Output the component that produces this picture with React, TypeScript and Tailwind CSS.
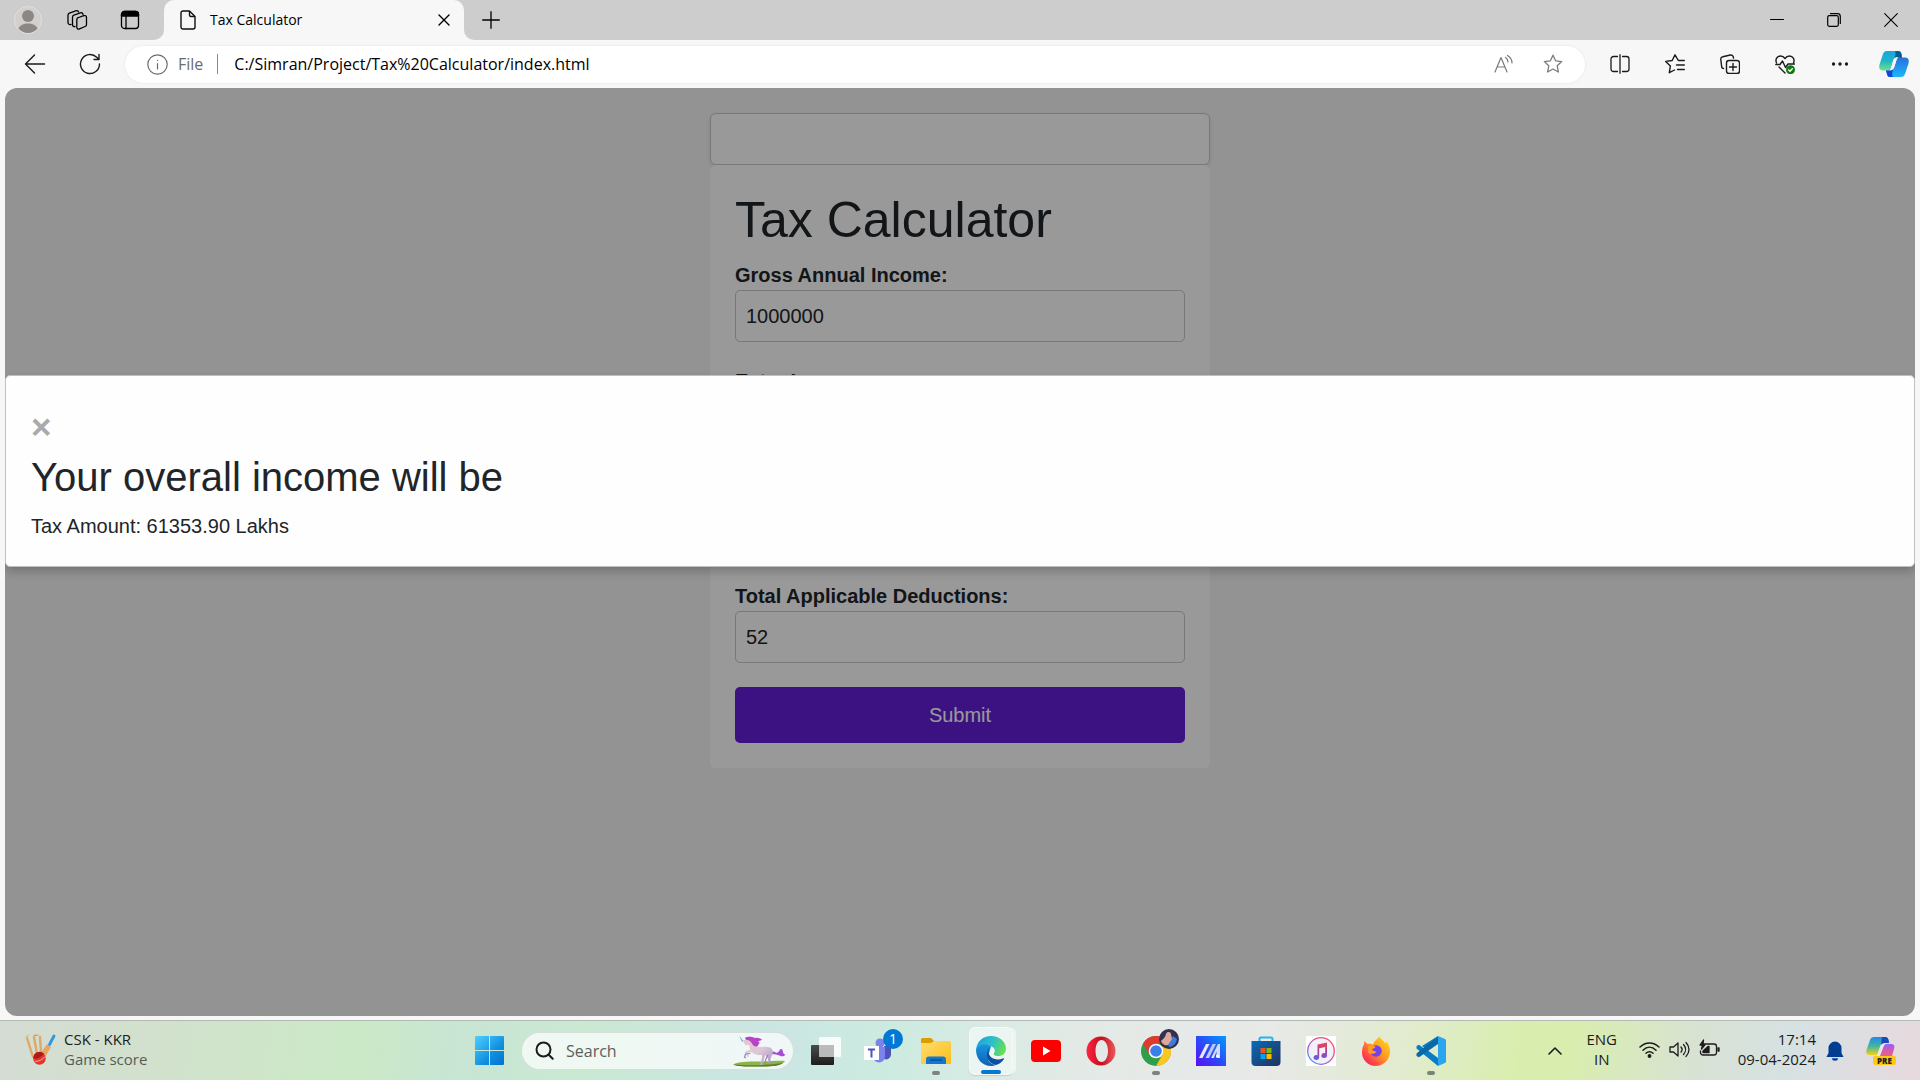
import React from "react";

const P = ({ children, s = 20, vb = "0 0 20 20", w = 1.3, className = "" }: { children: React.ReactNode; s?: number; vb?: string; w?: number; className?: string }) => (
  <svg width={s} height={s} viewBox={vb} fill="none" stroke="currentColor" strokeWidth={w} strokeLinecap="round" strokeLinejoin="round" className={className} aria-hidden="true">
    {children}
  </svg>
);

const IconButton = ({ label, className = "", children }: { label: string; className?: string; children: React.ReactNode }) => (
  <button type="button" aria-label={label} className={"flex h-9 shrink-0 items-center justify-center " + className}>
    {children}
  </button>
);

const starPath = "M10 1.2l2.6 5.6 6.1.8-4.5 4.2 1.2 6.2L10 15l-5.4 3 1.2-6.2L1.3 7.6l6.1-.8z";

function Copilot({ s = 30 }: { s?: number }) {
  return (
    <svg width={s} height={s} viewBox="0 0 30 30" aria-hidden="true">
      <defs>
        <linearGradient id="cpA" x1="0" y1="0" x2="0" y2="1">
          <stop offset="0" stopColor="#1aa5e0" />
          <stop offset=".5" stopColor="#1fb5c8" />
          <stop offset="1" stopColor="#6fe08a" />
        </linearGradient>
        <linearGradient id="cpB" x1="0" y1="0" x2="0" y2="1">
          <stop offset="0" stopColor="#2e6fdb" />
          <stop offset="1" stopColor="#18b9fb" />
        </linearGradient>
      </defs>
      <path d="M8 2h11c2 0 3 1 3.500 3L23 8h-4c-3 0-4 1-5 4l-2 7c-.5 2-1 2.500-3 2.500H4c-3 0-4.500-2-3.500-6L4 5c.7-2 2-3 4-3z" fill="url(#cpA)" />
      <path d="M16 2h3c2 0 3 1 3.500 3L23 9h-4c-2 0-3 .5-4 2 1-4 2.500-6 1-9z" fill="#0a5c8c" />
      <path d="M22 28H11c-2 0-2.500-1-3-3l-1-3.500h3c3 0 4.500-1 5.500-4l2-6.500c.5-1.700 1.500-2.500 3-2.500H26c3 0 4.500 2 3.500 6L26 25c-.7 2-2 3-4 3z" fill="url(#cpB)" />
      <path d="M14 28h-3c-2 0-2.500-1-3-3l-1-3.500h3c2 0 3.500-.7 4.500-2C13 23 12.500 26 14 28z" fill="#1643d8" />
      <path d="M14.500 11c.8-2.200 2-3 4-3h1.500c-1.300.3-2 1.200-2.500 2.800l-2.300 7.200c-.8 2.500-2.200 3.500-4.700 3.500H10c1-.3 1.700-1.200 2.200-2.800z" fill="#f7f7f7" />
    </svg>
  );
}

function TabBar() {
  return (
    <header className="flex h-10 items-center bg-[#cdcdcd] text-black">
      <div className="flex w-[164px] shrink-0 items-center pl-[9px]">
        <IconButton label="Profile" className="w-[38px]">
          <svg width="28" height="28" viewBox="0 0 28 28" aria-hidden="true">
            <circle cx="14" cy="14" r="13.500" fill="#d2d0cc" stroke="#e2e0dc" />
            <circle cx="14" cy="10" r="6" fill="#8a8785" />
            <path d="M4.500 22.500C6 19 9.500 17.500 14 17.500s8 1.500 9.500 5A13 13 0 0 1 14 27a13 13 0 0 1-9.500-4.500z" fill="#8a8785" />
          </svg>
        </IconButton>
        <IconButton label="Workspaces" className="ml-2 w-11">
          <P s={22} vb="0 0 22 22">
            <path d="M11.200 9l6.600-2.300c1.500-.5 2.700.2 2.700 1.800v7c0 1-.5 1.700-1.400 2l-5.600 2.400c-1.400.6-2.700-.1-2.700-1.600v-7.500c0-.9.2-1.400.9-1.800z" />
            <path d="M9 17.500c-1.500.3-2.500-.5-2.500-2V8.200c0-.9.5-1.600 1.400-2l6.300-2.400c1.400-.5 2.600.1 2.800 1.500" />
            <path d="M5 15.500c-1.600.3-3-.5-3-2V6.200c0-.9.5-1.600 1.400-2l6.300-2.400c1.400-.5 2.600.1 2.800 1" />
          </P>
        </IconButton>
        <IconButton label="Tab actions" className="ml-[9px] w-11">
          <P>
            <rect x="1.500" y="1.500" width="17" height="17" rx="3" />
            <path d="M1.500 6V4.500a3 3 0 0 1 3-3h11a3 3 0 0 1 3 3V6z" fill="currentColor" />
            <path d="M6 6v12.500" />
          </P>
        </IconButton>
      </div>
      <div className="relative flex h-10 w-[300px] items-center rounded-t-[10px] bg-[#f7f7f7] pl-4 pr-2">
        <svg width="10" height="10" viewBox="0 0 10 10" className="absolute -left-[10px] bottom-0" aria-hidden="true"><path d="M10 0v10H0A10 10 0 0 0 10 0z" fill="#f7f7f7" /></svg>
        <svg width="10" height="10" viewBox="0 0 10 10" className="absolute -right-[10px] bottom-0" aria-hidden="true"><path d="M0 0v10h10A10 10 0 0 1 0 0z" fill="#f7f7f7" /></svg>
        <svg width="16" height="20" viewBox="0 0 16 20" fill="none" stroke="#111" strokeWidth="1.400" strokeLinejoin="round" aria-hidden="true">
          <path d="M3 1h6.500L15 6.500V17a2 2 0 0 1-2 2H3a2 2 0 0 1-2-2V3a2 2 0 0 1 2-2z" />
          <path d="M9.500 1v4a1.500 1.500 0 0 0 1.500 1.500h4" />
        </svg>
        <span className="ml-3.5 flex-1 text-sm">Tax Calculator</span>
        <IconButton label="Close tab" className="w-6">
          <P s={12} vb="0 0 12 12" w={1.4}><path d="M1 1l10 10M11 1L1 11" /></P>
        </IconButton>
      </div>
      <IconButton label="New tab" className="ml-2 w-[38px]">
        <P s={18} vb="0 0 18 18" w={1.3}><path d="M9 .7v16.600M.7 9h16.600" /></P>
      </IconButton>
      <div className="ml-auto flex">
        <IconButton label="Minimize" className="w-[57px]"><P s={14} vb="0 0 14 14" w={1}><path d="M.5 6.500h13" /></P></IconButton>
        <IconButton label="Restore" className="w-[57px]">
          <P s={14} vb="0 0 14 14" w={1.2}><rect x=".7" y="2.700" width="10.600" height="10.600" rx="1.500" /><path d="M3.500.7h7a2.800 2.800 0 0 1 2.800 2.800v7" /></P>
        </IconButton>
        <IconButton label="Close" className="w-[58px]"><P s={14} vb="0 0 14 14" w={1.1}><path d="M.7.7l12.600 12.600M13.300.7L.7 13.300" /></P></IconButton>
      </div>
    </header>
  );
}

function Toolbar() {
  return (
    <nav className="flex h-12 items-center bg-[#f7f7f7] text-[#1b1b1b]">
      <IconButton label="Back" className="ml-[7px] w-[55px]">
        <P s={22} vb="0 0 22 22" w={1.4}><path d="M20.500 11h-19M10.500 2L1.500 11l9 9" /></P>
      </IconButton>
      <IconButton label="Refresh" className="w-[55px]">
        <P s={22} vb="0 0 22 22" w={1.4}><path d="M20.500 11A9.500 9.500 0 1 1 17.700 4.300L20 6.500M20 1.500v5h-5" /></P>
      </IconButton>
      <div className="ml-2 flex h-[37px] min-w-0 flex-1 items-center rounded-full bg-white pl-[22px] pr-3 shadow-[0_0_3px_rgba(0,0,0,0.08)]">
        <P s={21} vb="0 0 21 21" w={1.2} className="shrink-0 text-[#6b6b6b]"><circle cx="10.500" cy="10.500" r="9.700" /><path d="M10.500 9.500v5.500M10.500 6.300v.2" /></P>
        <span className="ml-2.5 text-base text-[#6b6b6b]">File</span>
        <span className="ml-3.5 h-5 w-px bg-[#8a8a8a]" />
        <input aria-label="Address" type="text" readOnly value="C:/Simran/Project/Tax%20Calculator/index.html" className="ml-4 min-w-0 flex-1 bg-transparent text-base text-black outline-none" />
        <IconButton label="Read aloud" className="w-10 text-[#7a7a7a]">
          <P w={1.2}><path d="M1 18L7 3.500 13 18M3 13h8" /><path d="M11.500 3.500c1.700 1 2.500 2.700 2.500 4.500M13.500 1.500c2.500 1.500 4.500 4 4.500 7.500" /></P>
        </IconButton>
        <IconButton label="Add to favorites" className="ml-[9px] w-10 text-[#7a7a7a]"><P><path d={starPath} /></P></IconButton>
      </div>
      <IconButton label="Split screen" className="ml-[7px] w-[55px]">
        <P><path d="M7.500 2.500h-4a2.500 2.500 0 0 0-2.500 2.500v10a2.500 2.500 0 0 0 2.500 2.500h4M12.500 2.500h4A2.500 2.500 0 0 1 19 5v10a2.500 2.500 0 0 1-2.500 2.500h-4M10 .7v18.600" /></P>
      </IconButton>
      <IconButton label="Favorites" className="w-[55px]">
        <P w={1.4}><path d="M19.300 6.500h-6L10 .8 7.200 6.500l-6.500.9 4.700 4.500-1.100 6.800L9.500 16M11.500 11h7.800M12.500 15.500h6.800" /></P>
      </IconButton>
      <IconButton label="Collections" className="w-[55px]">
        <P w={1.4}><path d="M3.500 14.500c-1 0-1.600-.5-1.800-1.500L.8 5.500c-.2-1.500.5-2.500 2-2.800l7.500-1.700c1.500-.3 2.700.5 3 2l.2 1" /><rect x="6.500" y="6.500" width="13" height="13" rx="2.500" /><path d="M13 9.500v7M9.500 13h7" /></P>
      </IconButton>
      <IconButton label="Browser essentials" className="w-[55px]">
        <P w={1.4}>
          <path d="M1.500 9C0 5.500 2 2 5.500 2 7.500 2 9 3 10 4.500 11 3 12.500 2 14.500 2 18 2 20 5.500 18.500 9M4 13l6 6" />
          <path d="M.8 10.500H5L7.500 7l3 6.500 2.500-3.500h6.500" />
          <circle cx="15.500" cy="15.800" r="4.500" fill="#107c10" stroke="none" /><path d="M13.700 16l1.300 1.200 2.300-2.500" stroke="#fff" />
        </P>
      </IconButton>
      <IconButton label="More" className="w-[55px]">
        <svg width="18" height="6" viewBox="0 0 18 6" fill="#1b1b1b" aria-hidden="true"><circle cx="2.500" cy="3" r="1.700" /><circle cx="9" cy="3" r="1.700" /><circle cx="15.500" cy="3" r="1.700" /></svg>
      </IconButton>
      <IconButton label="Copilot" className="w-[53px]"><Copilot /></IconButton>
    </nav>
  );
}

const labelClass = "block text-xl/[30px] font-bold";
const controlClass = "block w-full rounded-[5px] border border-[#c8c8c8] bg-white px-2.5 text-xl ";

function Field({ id, label, value }: { id: string; label: string; value: string }) {
  return (
    <div className="mb-6">
      <label htmlFor={id} className={labelClass}>{label}</label>
      <input id={id} type="text" defaultValue={value} className={controlClass + "h-[52px]"} />
    </div>
  );
}

function Page() {
  return (
    <main className="relative flex-1 overflow-hidden rounded-xl bg-[#f6f6f6] pt-[25px] font-['Liberation_Sans',Arial,sans-serif] text-[#212529]">
      <div className="mx-auto w-[500px]">
        <div className="h-[52px] rounded-md border border-[#c8c8c8] bg-white shadow-[0_2px_5px_rgba(0,0,0,0.1)]" />
        <form className="rounded-md bg-white p-[25px]" onSubmit={(e) => e.preventDefault()}>
          <h1 className="mb-2.5 text-[50px]/[60px]">Tax Calculator</h1>
          <Field id="gross" label="Gross Annual Income:" value="1000000" />
          <Field id="extra" label="Extra Income:" value="" />
          <div className="mb-6">
            <label htmlFor="age" className={labelClass}>Age Group:</label>
            <select id="age" className={controlClass + "h-[55px]"} />
          </div>
          <Field id="deductions" label="Total Applicable Deductions:" value="52" />
          <button type="submit" className="block h-14 w-full rounded-[5px] bg-[#651fd9] text-xl text-white">Submit</button>
        </form>
      </div>
      <div className="absolute inset-0 bg-black/40 pt-[287px]">
        <section role="dialog" aria-labelledby="result-title" className="rounded-[5px] border border-[#c0c0c0] bg-[#fefefe] p-[25px] shadow-[0_5px_10px_rgba(0,0,0,0.2)]">
          <button type="button" aria-label="Close result" className="block text-[35px]/[52px] font-bold text-[#aaa]">×</button>
          <h2 id="result-title" className="mb-2.5 text-[40px]/[48px]">Your overall income will be</h2>
          <p className="text-xl/[30px]">Tax Amount: 61353.90 Lakhs</p>
        </section>
      </div>
    </main>
  );
}

function TaskButton({ label, state = "", children }: { label: string; state?: "" | "open" | "active"; children: React.ReactNode }) {
  return (
    <button type="button" aria-label={label} className={"relative flex h-12 w-11 shrink-0 items-center justify-center rounded-md " + (state === "active" ? "border border-white/50 bg-white/50 shadow-[4px_0_0_-1px_rgba(255,255,255,0.5),0_1px_1px_rgba(0,0,0,0.12)]" : "")}>
      {children}
      {state === "open" && <span className="absolute bottom-0 h-1 w-2 rounded-full bg-[#7b837d]" />}
      {state === "active" && <span className="absolute bottom-0 h-1 w-5 rounded-full bg-[#0078d4]" />}
    </button>
  );
}

const S = ({ children }: { children: React.ReactNode }) => <svg width="30" height="30" viewBox="0 0 30 30" aria-hidden="true">{children}</svg>;

function Unicorn() {
  return (
    <svg width="54" height="32" viewBox="0 0 54 32" aria-hidden="true">
      <defs>
        <linearGradient id="uni" x1="0" y1="0" x2="1" y2="1"><stop offset="0" stopColor="#e9c3cf" /><stop offset=".5" stopColor="#dcc8d6" /><stop offset="1" stopColor="#a98fc6" /></linearGradient>
      </defs>
      <path d="M0 29.500c6-3 14-3 26-3s19-1 26-.5c-2 4-10 5.500-24 5.500S3 31.500 0 29.500z" fill="#8db446" />
      <path d="M1 29.500c10 1.200 40 1 49-2-3 3.500-10 4-22 4S4 32 1 29.500z" fill="#587f2b" />
      <path d="M6 .5l4.500 5.500-1.500 1z" fill="#74b6e8" />
      <path d="M38.500 17c2.500-1.500 4 1.500 6 .5 2.500-1 1.500-3.500 4-3.500 2 .5.500 5 4 5.500-1.500 2-3.500 2.500-6 1-2.500-.5-4-1.500-8-1.500z" fill="#a54fd6" />
      <path d="M12 3c3-2 7-1 10 0 3-.5 5 .5 7 1.500-1 1.500-3 1-4 2 2 .5 2 2 .5 2.500.5 1.500-1.500 3-3.500 3L15 9z" fill="#b544c8" />
      <path d="M10 5.500c3-1.500 6-.5 8 1.500 1.500 3 3 4.500 6.500 5 5 0 9-1 12.500.5 3 1.500 3.500 5 2 7.500l-1.500 3.500v4.500h-2l-.5-4.500-3-3.500-1 4-2 6h-2l2-7v-3c-4 0-8-.5-9.500-2.500-2-.5-3.500-.5-5 1l1.500 3-1.500.5-2.500-4.500c1-1.500 2.500-2.500 5.500-2.500-1-2-1-4-1.500-5.500l-3.500 1-1-2z" fill="url(#uni)" />
      <path d="M17.500 18.500l-5 .5-1 3 1.500 1M35 20l-2.500 5-.5 4.500" fill="none" stroke="#9c82bd" strokeWidth="1.200" />
    </svg>
  );
}

function Taskbar() {
  return (
    <footer className="grid h-[60px] grid-cols-[1fr_auto_1fr] items-center border-t border-[#b3b9b3] bg-[linear-gradient(100deg,#d5dcd4_0%,#d2e1cd_8%,#cbe9c6_19%,#c8e5d5_24%,#cae8d2_30%,#cbe5e3_40%,#ccebe0_46%,#e3eae6_56%,#e8e9e8_66%,#e2ebcf_73%,#d9eeae_79%,#d9edb0_82%,#d8e2d2_88%,#d6e1e3_93%,#e7d9de_100%)] text-[15px]/[20px] text-[#1c1c1c]">
      <button type="button" className="flex items-center pb-1 pl-6 text-left">
        <svg width="32" height="32" viewBox="0 0 32 32" aria-hidden="true">
          <path d="M3 5l6 19M10 4l3 17M16 4l1 16" stroke="#dda968" strokeWidth="2.400" strokeLinecap="round" />
          <path d="M1.500 4l3.500-2M9 2.500l3-1 3 1" stroke="#d8c3a0" strokeWidth="1.500" />
          <path d="M23 11l4 3-8 14-5-4z" fill="#e3a868" />
          <path d="M25.500 11.500L30 3" stroke="#2f96e0" strokeWidth="2.800" strokeLinecap="round" />
          <circle cx="15.500" cy="25.500" r="6.200" fill="#e3352b" /><path d="M9.500 25.500c2 1 8-1 10.500-5a6.200 6.200 0 0 0-10.500 5z" fill="#b3171b" /><path d="M11 28.500c4 0 8-2 10-5" stroke="#f5a79b" fill="none" />
        </svg>
        <span className="ml-2"><span className="block">CSK - KKR</span><span className="block text-[#555c55]">Game score</span></span>
      </button>
      <div className="flex items-center gap-[11px]">
        <TaskButton label="Start">
          <svg width="29" height="29" viewBox="0 0 29 29" aria-hidden="true">
            <defs><linearGradient id="win" x1="0" y1="0" x2="1" y2="1"><stop offset="0" stopColor="#4fd0ff" /><stop offset=".6" stopColor="#1290e0" /><stop offset="1" stopColor="#0072cf" /></linearGradient></defs>
            <path d="M1 0h13v14H0V1a1 1 0 0 1 1-1zM15 0h13a1 1 0 0 1 1 1v13H15zM0 15h14v14H1a1 1 0 0 1-1-1zM15 15h14v13a1 1 0 0 1-1 1H15z" fill="url(#win)" />
          </svg>
        </TaskButton>
        <label className="-mx-px flex h-[38px] w-[273px] items-center overflow-hidden rounded-full border border-black/10 bg-white/70 pl-[13px] pr-1.5">
          <P s={19} vb="0 0 19 19" w={2}><circle cx="8.500" cy="8.500" r="7" /><path d="M13.700 13.700l4 4" /></P>
          <input type="text" aria-label="Search" placeholder="Search" className="ml-3 min-w-0 flex-1 bg-transparent text-base placeholder:text-[#5a605c] outline-none" />
          <Unicorn />
        </label>
        <TaskButton label="Task view">
          <S>
            <defs><linearGradient id="tv" x1="0" y1="0" x2="0" y2="1"><stop offset="0" stopColor="#4b4b4b" /><stop offset="1" stopColor="#1d1d1d" /></linearGradient></defs>
            <rect x="0" y="9" width="23" height="20" rx="1" fill="url(#tv)" /><rect x="8" y="1" width="22" height="20" rx="1" fill="#fff" opacity=".85" /><path d="M8 9h15v12H8z" fill="#b0b0b0" opacity=".8" />
          </S>
        </TaskButton>
        <TaskButton label="Teams">
          <svg width="36" height="34" viewBox="0 0 36 34" aria-hidden="true">
            <path d="M21 12h7v9a5 5 0 0 1-7 4z" fill="#4f52b8" /><circle cx="17" cy="9" r="4.500" fill="#7b83eb" /><path d="M10 13h12v9.500a6 6 0 0 1-12 0z" fill="#7b83eb" />
            <rect x="1" y="12" width="15" height="14" fill="#fff" /><path d="M5 15.500h7M8.500 15.500v8" stroke="#4b53bc" strokeWidth="2" />
          </svg>
          <span className="absolute right-0 top-0.5 flex size-5 items-center justify-center rounded-full bg-[#0078d4] text-sm text-white">1</span>
        </TaskButton>
        <TaskButton label="File Explorer" state="open">
          <S>
            <defs><linearGradient id="fe" x1="0" y1="0" x2="1" y2="1"><stop offset="0" stopColor="#ffdf6e" /><stop offset="1" stopColor="#fbbc1c" /></linearGradient></defs>
            <path d="M0 3.500A1.500 1.500 0 0 1 1.500 2H10l3 3v6H0z" fill="#dd9c04" /><path d="M0 7h10l3-2h15.500A1.500 1.500 0 0 1 30 6.500V28H0z" fill="url(#fe)" /><path d="M5 28v-4.500a3 3 0 0 1 3-3h14a3 3 0 0 1 3 3V28z" fill="#1277d3" /><path d="M9 24h12" stroke="#0a4f94" strokeWidth="1.500" />
          </S>
        </TaskButton>
        <TaskButton label="Edge" state="active">
          <S>
            <defs>
              <linearGradient id="eg" x1="0" y1=".3" x2="1" y2=".6"><stop offset="0" stopColor="#1f9fe0" /><stop offset=".5" stopColor="#2cc0c8" /><stop offset="1" stopColor="#6be04c" /></linearGradient>
              <linearGradient id="eb" x1="0" y1="0" x2="0" y2="1"><stop offset="0" stopColor="#1994e0" /><stop offset="1" stopColor="#0e62b5" /></linearGradient>
            </defs>
            <path d="M0 14C1 5 7 0 15 0c8.500 0 15 6 15 12.500 0 5-3.500 7.500-8 7.500-3 0-5-1-4-2.500 2-3 .5-6.500-4-7.500C9 9 4 10 0 14z" fill="url(#eg)" />
            <path d="M15 10.500C10 7 2 8.500 0 14c0 9 6.500 16 15 16 2 0 4-.5 5-1-6-1-8-4-8-8.500z" fill="url(#eb)" />
            <path d="M14.500 10.800C9 15 9.500 27 20 29c4-1 6.500-3.500 8-6 .3-.8-.2-1-.8-.7-7 3.500-15-.8-14.700-7 0-1.800.8-3.300 2-4.500z" fill="#0c509f" />
          </S>
        </TaskButton>
        <TaskButton label="YouTube"><S><rect y="4" width="30" height="22" rx="4" fill="#f00" /><path d="M12 10.500l7.500 4.500-7.500 4.500z" fill="#fff" /></S></TaskButton>
        <TaskButton label="Opera">
          <S><defs><linearGradient id="op" x1="0" y1="0" x2="1" y2="0"><stop offset="0" stopColor="#ff2540" /><stop offset=".5" stopColor="#c4101d" /><stop offset="1" stopColor="#ea5a5a" /></linearGradient></defs>
            <path fillRule="evenodd" d="M15 .5A14.500 14.500 0 1 1 15 29.500 14.500 14.500 0 0 1 15 .5zM15.500 4C12 4 9.500 8.500 9.500 15s2.500 11 6 11 6.500-4.500 6.500-11S19 4 15.500 4z" fill="url(#op)" /></S>
        </TaskButton>
        <TaskButton label="Chrome" state="open">
          <S>
            <circle cx="15" cy="15" r="15" fill="#2f9e48" />
            <path d="M28 7.500A15 15 0 0 1 15 30l6.500-11.500L21 8z" fill="#fcc71d" />
            <path d="M2 7.500l6.500 11.500L15 8h13.300A15 15 0 0 0 2 7.500z" fill="#e0392f" />
            <circle cx="15" cy="15" r="7.300" fill="#fff" /><circle cx="15" cy="15" r="5.800" fill="#3b7de9" />
          </S>
          <svg width="20" height="20" viewBox="0 0 20 20" className="absolute -right-px top-0.5" aria-hidden="true"><circle cx="10" cy="10" r="10" fill="#33304f" /><path d="M10 18a9 9 0 0 0 8-8l-4-3-5 8z" fill="#3d7be0" /><path d="M2 12c2-2 4-3 5-7 1-3 5-2 5 0l1 5-4 6c-3 1-6-1-7-4z" fill="#dca89c" /></svg>
        </TaskButton>
        <TaskButton label="MyASUS">
          <S><defs><linearGradient id="ma" x1="0" y1="1" x2="1" y2="0"><stop offset="0" stopColor="#5c0cf5" /><stop offset=".5" stopColor="#2a4df8" /><stop offset="1" stopColor="#009bff" /></linearGradient></defs>
            <path d="M0 0h30v30H0z" fill="url(#ma)" /><path d="M3 22l7-14h3.500L6.500 22z" fill="#e6ebff" /><path d="M9.500 22l7-14H20l-7 14z" fill="#b9c8ff" /><path d="M15 22l7-14h2v14h-3.500v-7L18 22z" fill="#d3dcff" /><circle cx="21.500" cy="20" r="1.500" fill="#fff" /></S>
        </TaskButton>
        <TaskButton label="Microsoft Store">
          <S><defs><linearGradient id="ms" x1="0" y1="0" x2="1" y2="1"><stop offset="0" stopColor="#0a6ab8" /><stop offset="1" stopColor="#20335c" /></linearGradient></defs>
            <path d="M8.500 6V3a1.500 1.500 0 0 1 1.500-1.500h10A1.500 1.500 0 0 1 21.500 3v3" fill="none" stroke="#25b5e8" strokeWidth="2" /><path d="M.5 5h29v21a4 4 0 0 1-4 4h-21a4 4 0 0 1-4-4z" fill="url(#ms)" />
            <path d="M9.500 12h5v5h-5z" fill="#f25022" /><path d="M15.500 12h5v5h-5z" fill="#7fba00" /><path d="M9.500 18h5v5h-5z" fill="#00a4ef" /><path d="M15.500 18h5v5h-5z" fill="#ffb900" /></S>
        </TaskButton>
        <TaskButton label="iTunes">
          <S><defs><linearGradient id="it" x1="1" y1="0" x2="0" y2="1"><stop offset="0" stopColor="#fa4b60" /><stop offset=".4" stopColor="#e3508c" /><stop offset=".7" stopColor="#8b5cf0" /><stop offset="1" stopColor="#36bdf8" /></linearGradient><linearGradient id="nt" x1="0" y1="0" x2="0" y2="1"><stop offset="0" stopColor="#f0465a" /><stop offset=".5" stopColor="#b03f90" /><stop offset="1" stopColor="#5b62ee" /></linearGradient></defs>
            <path d="M0 0h30v30H0z" fill="#fff" /><circle cx="15" cy="15" r="13.300" fill="#f3f1f8" stroke="url(#it)" strokeWidth="1.300" /><path d="M11.500 8.500l9.500-2v13a2.800 2.400 0 1 1-1.800-2.200V11l-6 1.300v9.200a2.800 2.400 0 1 1-1.700-2.200z" fill="url(#nt)" /></S>
        </TaskButton>
        <TaskButton label="Firefox">
          <S><defs><linearGradient id="ff" x1="1" y1="0" x2="0" y2="1"><stop offset="0" stopColor="#ffe226" /><stop offset=".45" stopColor="#ff9a1f" /><stop offset=".8" stopColor="#ff3750" /><stop offset="1" stopColor="#e31587" /></linearGradient></defs>
            <path d="M18.500.5c1 2.500 4 4 6 7l1-2c3 4 4 7.500 3.500 11.500C28 24.500 22 30 15 30 7 30 1 24 1 16.500c0-4 1-6.500 2-8L3.500 5l3 3C9 7.500 10.500 7.800 12 8.500c1.500-4 4-5 6.500-8z" fill="url(#ff)" />
            <circle cx="15" cy="15" r="5.800" fill="#7543e5" /><path d="M7 10c3-1.500 6-1 7.500 1-1 1.500-3 1.500-3.500 3 1.500 1 3.500 1 4.500 2-2 2-5 2.500-8 1z" fill="#ff9a2b" /></S>
        </TaskButton>
        <TaskButton label="Visual Studio Code" state="open">
          <S><path d="M22 0L8 12.500 3 8.700.5 10v2.500L22 30V22L6 10z" fill="#0b7cc4" /><path d="M22 0v8L3 21.300.5 20v-2.500z" fill="#0868a8" /><path d="M22 0l7 3a1.500 1.500 0 0 1 1 1.500v21a1.500 1.500 0 0 1-1 1.500l-7 3z" fill="#2aa5ef" /></S>
        </TaskButton>
      </div>
      <div className="flex items-center justify-end pr-6">
        <IconButton label="Show hidden icons" className="w-8"><P s={14} vb="0 0 14 14" w={1.6}><path d="M1 10l6-6 6 6" /></P></IconButton>
        <button type="button" className="ml-[15px] w-8 pb-1 text-center">ENG<br />IN</button>
        <button type="button" aria-label="Network, sound and battery" className="ml-[21px] flex items-center gap-[9px] pb-0.5">
          <P s={21} vb="0 0 21 21" w={1.5}><path d="M1 8c5.500-5.500 13.500-5.500 19 0M4 11.300c4-4 9-4 13 0M7 14.300c2-2 5-2 7 0" /><circle cx="10.500" cy="17" r="1.200" fill="currentColor" /></P>
          <P s={21} vb="0 0 21 21"><path d="M1 8v5h3.500L9 17V4L4.500 8zM12 8c1.300 1.500 1.300 3.500 0 5M14.500 5.500c2.700 3 2.700 7 0 10M17 3.500c4 4 4 10 0 14" /></P>
          <P s={21} vb="0 0 21 21"><path d="M7.500 5H15a2.500 2.500 0 0 1 2.500 2.500v6A2.500 2.500 0 0 1 15 16H4a2.500 2.500 0 0 1-2.500-2.500V12" /><path d="M19 9v3h1V9z" fill="currentColor" /><path d="M4 13.500V12l5-4.500h1v6z" fill="currentColor" /><path d="M4.500 1L1 6h2.500L2.500 10 6.500 5H4z" fill="currentColor" /></P>
        </button>
        <button type="button" className="ml-[18px] pb-1 text-right">17:14<br />09-04-2024</button>
        <IconButton label="Notifications" className="ml-2.5 w-[18px]">
          <svg width="18" height="20" viewBox="0 0 18 20" fill="#003e92" aria-hidden="true"><path d="M9 .5a6.500 6.500 0 0 1 6.500 6.500v5l2 4H.5l2-4V7A6.500 6.500 0 0 1 9 .5zM6 17.200h6a3 2.500 0 0 1-6 0z" /></svg>
        </IconButton>
        <IconButton label="Copilot preview" className="ml-[22px] w-[30px]">
          <svg width="30" height="30" viewBox="0 0 30 30" aria-hidden="true">
            <defs>
              <linearGradient id="pa" x1="0" y1="0" x2="0" y2="1"><stop offset="0" stopColor="#2488e8" /><stop offset=".5" stopColor="#3fb6a0" /><stop offset="1" stopColor="#f0d21c" /></linearGradient>
              <linearGradient id="pb" x1="0" y1="0" x2="0" y2="1"><stop offset="0" stopColor="#a05cf5" /><stop offset="1" stopColor="#f0607c" /></linearGradient>
            </defs>
            <path d="M8 1h11c2 0 3 1 3.500 3l.5 3h-4c-3 0-4 1-5 4l-3 8H3c-2.500 0-3.300-2-2.500-5L4 4c.7-2 2-3 4-3z" fill="url(#pa)" /><path d="M16 1h3c2 0 3 1 3.500 3l.5 3h-4c-2 0-3 .5-4 2z" fill="#1b49b8" />
            <path d="M13 20l4-9.500c.5-2 1.500-2.500 3-2.500h5c3 0 4 1.500 3.200 4.500L26 20z" fill="url(#pb)" />
            <path d="M14 11c.8-2.200 2-3 4-3h2c-1.300.3-2 1.200-2.500 2.800L14 20h-3z" fill="#efe6ea" />
            <rect x="7" y="20" width="23" height="9" rx="2" fill="#ffc814" /><text x="18.500" y="27.500" textAnchor="middle" fontSize="8" fontWeight="800" fontFamily="Open Sans" fill="#222">PRE</text>
          </svg>
        </IconButton>
      </div>
    </footer>
  );
}

export default function App() {
  return (
    <div className="flex min-h-screen flex-col bg-[#f7f7f7] font-['Open_Sans','Noto_Sans',sans-serif]">
      <TabBar />
      <Toolbar />
      <div className="flex flex-1 flex-col px-[5px] pb-1"><Page /></div>
      <Taskbar />
    </div>
  );
}
